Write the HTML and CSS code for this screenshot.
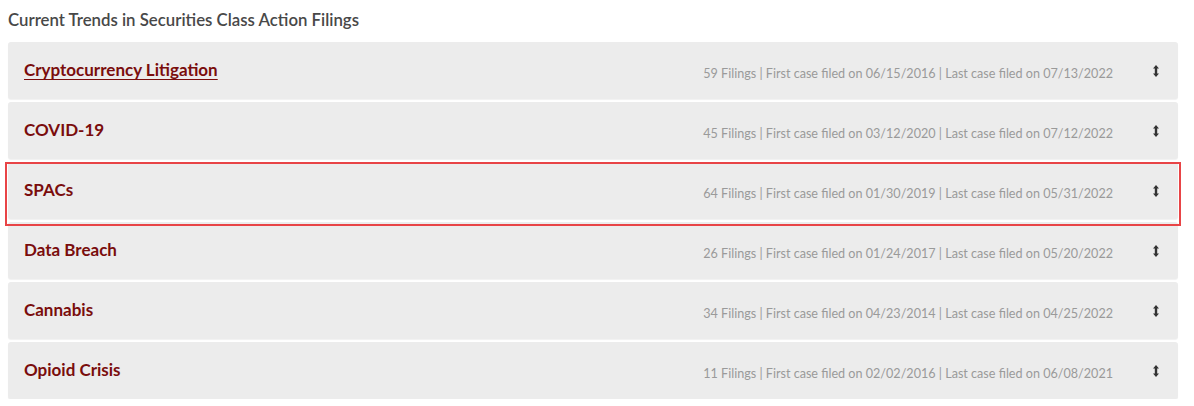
FILE: index.html
```html
<!DOCTYPE html>
<html>
<head>
<meta charset="utf-8">
<link rel="stylesheet" href="styles.css">
</head>
<body>
<h2 class="heading">Current Trends in Securities Class Action Filings</h2>
<div class="list">
  <div class="panel">
    <a class="panel-title link" href="#">Cryptocurrency Litigation</a>
    <span class="meta">59 Filings | First case filed on 06/15/2016 | Last case filed on 07/13/2022</span>
    <svg class="icon" width="8" height="14" viewBox="0 0 8 14"><path d="M4 1 L7 4.5 H5.2 V9.5 H7 L4 13 L1 9.5 H2.8 V4.5 H1 Z" fill="#333"/></svg>
  </div>
  <div class="panel">
    <span class="panel-title">COVID-19</span>
    <span class="meta">45 Filings | First case filed on 03/12/2020 | Last case filed on 07/12/2022</span>
    <svg class="icon" width="8" height="14" viewBox="0 0 8 14"><path d="M4 1 L7 4.5 H5.2 V9.5 H7 L4 13 L1 9.5 H2.8 V4.5 H1 Z" fill="#333"/></svg>
  </div>
  <div class="panel highlighted">
    <span class="panel-title">SPACs</span>
    <span class="meta">64 Filings | First case filed on 01/30/2019 | Last case filed on 05/31/2022</span>
    <svg class="icon" width="8" height="14" viewBox="0 0 8 14"><path d="M4 1 L7 4.5 H5.2 V9.5 H7 L4 13 L1 9.5 H2.8 V4.5 H1 Z" fill="#333"/></svg>
  </div>
  <div class="panel">
    <span class="panel-title">Data Breach</span>
    <span class="meta">26 Filings | First case filed on 01/24/2017 | Last case filed on 05/20/2022</span>
    <svg class="icon" width="8" height="14" viewBox="0 0 8 14"><path d="M4 1 L7 4.5 H5.2 V9.5 H7 L4 13 L1 9.5 H2.8 V4.5 H1 Z" fill="#333"/></svg>
  </div>
  <div class="panel">
    <span class="panel-title">Cannabis</span>
    <span class="meta">34 Filings | First case filed on 04/23/2014 | Last case filed on 04/25/2022</span>
    <svg class="icon" width="8" height="14" viewBox="0 0 8 14"><path d="M4 1 L7 4.5 H5.2 V9.5 H7 L4 13 L1 9.5 H2.8 V4.5 H1 Z" fill="#333"/></svg>
  </div>
  <div class="panel">
    <span class="panel-title">Opioid Crisis</span>
    <span class="meta">11 Filings | First case filed on 02/02/2016 | Last case filed on 06/08/2021</span>
    <svg class="icon" width="8" height="14" viewBox="0 0 8 14"><path d="M4 1 L7 4.5 H5.2 V9.5 H7 L4 13 L1 9.5 H2.8 V4.5 H1 Z" fill="#333"/></svg>
  </div>
</div>
</body>
</html>
```

FILE: styles.css
```css
* { box-sizing: border-box; }
html, body { margin: 0; background: #fff; }
body {
  padding: 10px 16px 0 8px;
  font-family: Lato, "Open Sans", "Liberation Sans", sans-serif;
}
.heading {
  margin: 0 0 12px 0;
  font-size: 16.8px;
  line-height: 20px;
  font-weight: 600;
  color: #484848;
}
.list {
  display: flex;
  flex-direction: column;
  gap: 3px;
}
.panel {
  position: relative;
  display: flex;
  align-items: center;
  height: 57px;
  padding: 0 18px 0 16px;
  background: #ececec;
  border-radius: 3px;
  box-shadow: 0 1px 1px rgba(0,0,0,0.06);
}
.panel-title {
  flex: 1;
  font-size: 17px;
  font-weight: 700;
  color: #7a0d0d;
  text-decoration: none;
  padding-bottom: 2px;
}
.panel-title.link {
  text-decoration: underline;
  text-decoration-thickness: 1px;
  text-underline-offset: 3px;
}
.meta {
  font-size: 12.6px;
  color: #9a9a9a;
  padding-top: 5px;
}
.icon {
  margin-left: 39px;
  flex: none;
}
.highlighted { z-index: 1; }
.highlighted::after {
  content: "";
  position: absolute;
  left: -3px;
  right: -3px;
  top: 0px;
  bottom: -7px;
  border: 2px solid #e84446;
  pointer-events: none;
}
```
